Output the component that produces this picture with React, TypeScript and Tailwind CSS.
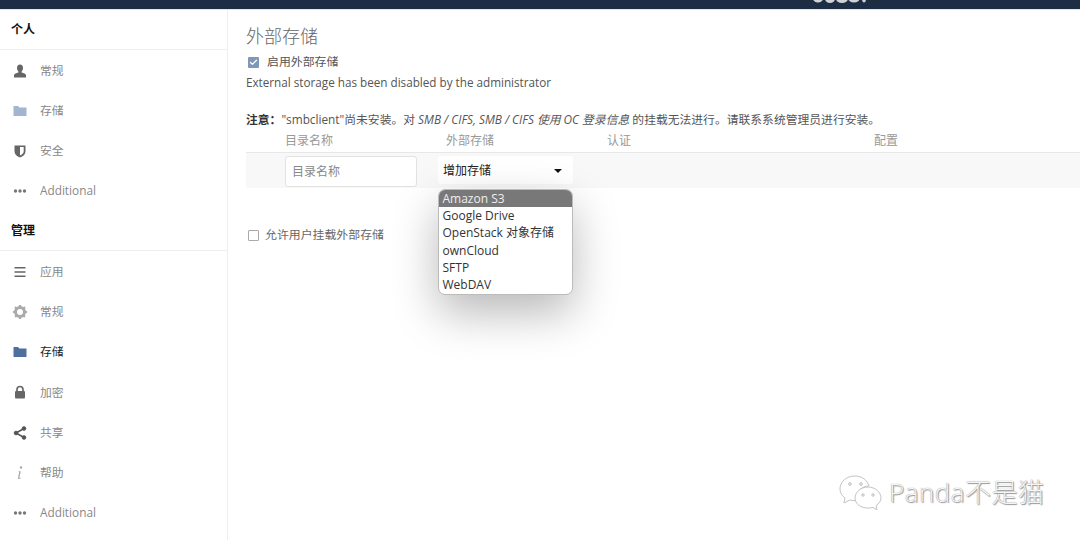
import { Check } from "lucide-react";
import type { ReactNode } from "react";

const FONT = "font-['Open_Sans','Noto_Sans_CJK_SC',sans-serif]";

function NavItem({ icon, label, active }: { icon: ReactNode; label: string; active?: boolean }) {
  return (
    <div className="h-10 flex items-center pl-[13px]">
      <svg width="14" height="14" viewBox="0 0 14 14" className="shrink-0">{icon}</svg>
      <span className={`ml-[13px] text-[11.8px] ${active ? "text-[#222]" : "text-[#888]"}`}>{label}</span>
    </div>
  );
}

function SectionTitle({ children }: { children: ReactNode }) {
  return (
    <div className="h-10 pl-[11px] pt-[1px] flex items-center border-b border-[#eeeeee] text-[12px] font-semibold text-[#111]">
      {children}
    </div>
  );
}

const folder = "M0.500 2h4.500l1.500 1.500h7v8.500h-13z";
const dots = (
  <g fill="#777">
    <circle cx="2.500" cy="7" r="1.700" />
    <circle cx="7" cy="7" r="1.700" />
    <circle cx="11.500" cy="7" r="1.700" />
  </g>
);

const OPTIONS = ["Google Drive", "OpenStack 对象存储", "ownCloud", "SFTP", "WebDAV"];

export default function App() {
  return (
    <div className={`${FONT} relative w-[1080px] h-[540px] overflow-hidden bg-white`}>
      {/* Header */}
      <header className="h-[10px] bg-[#1d2d44] border-b border-[#dfe5ee] relative overflow-hidden">
        <svg className="absolute left-[812px] top-0" width="56" height="4" viewBox="0 0 56 4" fill="#cfd3d8">
          <ellipse cx="6" cy="-1.500" rx="5" ry="4" />
          <ellipse cx="18" cy="-1.500" rx="5" ry="4.500" />
          <ellipse cx="30" cy="-1.500" rx="6" ry="4.500" />
          <ellipse cx="42" cy="-2" rx="6" ry="4.500" />
          <ellipse cx="52" cy="-1.500" rx="2" ry="4" />
        </svg>
      </header>

      <div className="flex h-[530px]">
        {/* Sidebar */}
        <aside className="w-[228px] shrink-0 border-r border-[#eeeeee]">
          <SectionTitle>个人</SectionTitle>
          <div className="pt-[1px]">
            <NavItem
              icon={<path fill="#666" d="M7 0.500c-2 0-3 1.500-3 3.500 0 1.500.6 2.700 1.400 3.400v1.100c-2 .6-4.400 1.200-4.400 2.500v2.500h12v-2.500c0-1.300-2.400-1.900-4.400-2.500v-1.100c.8-.7 1.400-1.900 1.400-3.400 0-2-1-3.500-3-3.500z" />}
              label="常规"
            />
            <NavItem icon={<path fill="#a4b5cf" d={folder} />} label="存储" />
            <NavItem
              icon={<path fillRule="evenodd" fill="#666" d="M1.500 1.500h11v6c0 3-2.500 5-5.500 6-3-1-5.500-3-5.500-6zM7 3v8.500c2-.8 3.700-2.200 3.700-4v-4.500z" />}
              label="安全"
            />
            <NavItem icon={dots} label="Additional" />
          </div>
          <SectionTitle>管理</SectionTitle>
          <div className="pt-[1px] flex flex-col gap-[0.17px]">
            <NavItem
              icon={<path fill="#666" d="M1.500 2h11v1.600h-11zM1.500 6.200h11v1.600h-11zM1.500 10.400h11v1.600h-11z" />}
              label="应用"
            />
            <NavItem
              icon={
                <g>
                  <circle cx="7" cy="7" r="4.500" fill="none" stroke="#aaa" strokeWidth="3" />
                  <path stroke="#aaa" strokeWidth="2.200" d="M7 0v14M0 7h14M2 2l10 10M12 2l-10 10" strokeDasharray="2 10 2 10" />
                </g>
              }
              label="常规"
            />
            <NavItem icon={<path fill="#4f6f9f" d={folder} />} label="存储" active />
            <NavItem
              icon={
                <g>
                  <rect x="2" y="6" width="10" height="7.500" rx="1" fill="#666" />
                  <path d="M4 7V4.500a3 3 0 0 1 6 0V7" fill="none" stroke="#666" strokeWidth="1.700" />
                </g>
              }
              label="加密"
            />
            <NavItem
              icon={
                <g fill="#555" stroke="#555">
                  <path d="M11 2.500L3 7l8 4.500" fill="none" strokeWidth="1.500" />
                  <circle cx="11" cy="2.500" r="1.800" />
                  <circle cx="3" cy="7" r="1.800" />
                  <circle cx="11" cy="11.500" r="1.800" />
                </g>
              }
              label="共享"
            />
            <NavItem
              icon={
                <g fill="#aaa">
                  <circle cx="8" cy="1.500" r="1.200" />
                  <path d="M5.500 5.200h2.300L6.400 11.800c0 .4.400.4 1.400-.3l.2.400c-1.300 1-3.200 1.700-3 .2l1.200-6c0-.3-.3-.4-.8-.4z" />
                </g>
              }
              label="帮助"
            />
            <NavItem icon={dots} label="Additional" />
          </div>
        </aside>

        {/* Main */}
        <main className="flex-1 pl-[18px] pt-[14px] text-[#555]">
          <h2 className="text-[18px] leading-[24px] font-light text-[#666]">外部存储</h2>
          <div className="flex items-center h-[20px] mt-[4px] pl-[2px]">
            <span className="w-[11px] h-[11px] rounded-[1px] bg-[#7f97b8] flex items-center justify-center">
              <Check size={9} stroke="#fff" strokeWidth={3.5} />
            </span>
            <span className="ml-[8px] text-[11.900px] text-[#555]">启用外部存储</span>
          </div>
          <p className="text-[11.700px] leading-[20px] text-[#555]">
            External storage has been disabled by the administrator
          </p>
          <p className="text-[11.800px] leading-[20px] mt-[17px] text-[#555] whitespace-nowrap">
            <strong className="font-semibold text-[#333]">注意：</strong>"smbclient"尚未安装。对 <em>SMB / CIFS, SMB / CIFS 使用 OC 登录信息</em> 的挂载无法进行。请联系系统管理员进行安装。
          </p>

          {/* Table header */}
          <div className="flex h-[24px] items-center pl-[39px] text-[12px] text-[#999] border-b border-[#e8e8e8]">
            <span className="w-[161px]">目录名称</span>
            <span className="w-[161px]">外部存储</span>
            <span className="w-[267px]">认证</span>
            <span>配置</span>
          </div>
          {/* Table row */}
          <div className="flex h-[35px] pl-[39px] pt-[3px] bg-[#f8f8f8] text-[12px]">
            <div className="w-[132px] h-[31px] bg-white border border-[#e2e2e2] rounded-[3px] flex items-center pl-[6px] text-[#888]">
              目录名称
            </div>
            <div className="relative ml-[21px] w-[135px] h-[28px] bg-white rounded-[3px] flex items-center justify-between pl-[5px] pr-[11px] pt-[2px] text-[#222]">
              增加存储
              <span className="w-0 h-0 border-x-[4px] border-x-transparent border-t-[4px] border-t-[#111]" />
              {/* Open select list */}
              <ul className="absolute left-0 top-[33px] w-[135px] h-[106px] bg-white rounded-[7px] border border-[#bbb] overflow-hidden text-[12px] leading-[17.3px] text-[#333] shadow-[0_18px_45px_rgba(0,0,0,0.28)] z-10">
                <li className="bg-[#787878] text-[#eee] pl-[3.500px] h-[17px]">Amazon S3</li>
                {OPTIONS.map((o) => (
                  <li key={o} className="pl-[3.500px] h-[17.300px] whitespace-nowrap">{o}</li>
                ))}
              </ul>
            </div>
          </div>

          <div className="flex items-center mt-[37px] pl-[2px] h-[20px]">
            <span className="w-[11px] h-[11px] rounded-[1px] border border-[#aaa] bg-white" />
            <span className="ml-[6px] text-[11.900px] text-[#666]">允许用户挂载外部存储</span>
          </div>
        </main>
      </div>

      {/* Watermark over the page */}
      <div className="absolute left-[838px] top-[474px] flex items-center">
        <svg width="46" height="36" viewBox="0 0 46 36" fill="#fff" stroke="#c4c4c4" strokeWidth="1">
          <path d="M17 2C8 2 2 8 2 15c0 4 2 7 5 9l-1 5 6-3c2 .6 4 .8 6 .6C17 18 24 12 31 12 29 6 24 2 17 2z" />
          <path d="M30 13c-7 0-13 5-13 11s6 10 13 10c2 0 3 0 5-.6l4 2.600-1-4.400c3-2 5-4.600 5-7.600 0-6-6-11-13-11z" />
          <circle cx="12" cy="10" r="1.300" stroke="#bbb" />
          <circle cx="23" cy="10" r="1.300" stroke="#bbb" />
          <circle cx="25" cy="21" r="1.200" stroke="#bbb" />
          <circle cx="35" cy="21" r="1.200" stroke="#bbb" />
        </svg>
        <span className="ml-[5px] text-[26px] leading-[36px] tracking-[0.5px] font-light text-[#f6f6f6] [text-shadow:0_0_1px_#777,1px_1px_1px_#999]">
          Panda不是猫
        </span>
      </div>
    </div>
  );
}
